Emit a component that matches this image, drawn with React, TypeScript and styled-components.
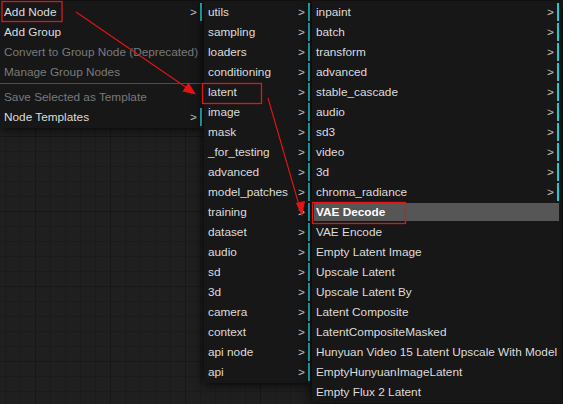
import React from "react";
import styled, { createGlobalStyle } from "styled-components";

const GlobalStyle = createGlobalStyle`
  html, body {
    margin: 0;
    padding: 0;
    background: #1e1e1e;
    overflow: hidden;
  }
  * { box-sizing: border-box; }
`;

// Node-graph canvas with a fine grid and a coarser major grid on top.
const Canvas = styled.div`
  position: relative;
  width: 563px;
  height: 404px;
  overflow: hidden;
  padding-top: 1px;
  display: flex;
  align-items: flex-start;
  background-color: #1f1f1f;
  background-image:
    linear-gradient(to right, #171717 1px, transparent 1px),
    linear-gradient(to bottom, #171717 1px, transparent 1px),
    linear-gradient(to right, #1b1b1b 1px, transparent 1px),
    linear-gradient(to bottom, #1b1b1b 1px, transparent 1px);
  background-size: 75px 75px, 75px 75px, 15px 15px, 15px 15px;
  background-position: 35px 61px, 35px 61px, 5px 1px, 5px 1px;
  font-family: "Liberation Sans", Arial, sans-serif;
  font-size: 11.8px;
`;

const Menu = styled.div<{ $width: number }>`
  position: relative;
  flex: none;
  width: ${(p) => p.$width}px;
  display: flex;
  flex-direction: column;
  gap: 2px;
  padding: 2px;
  background: #171717;
  box-shadow: 0 0 10px #000;
`;

const Entry = styled.div<{ $sub?: boolean; $disabled?: boolean; $active?: boolean }>`
  height: 18px;
  display: flex;
  align-items: center;
  justify-content: space-between;
  padding: 0 3px 0 2px;
  white-space: nowrap;
  line-height: 18px;
  color: ${(p) => (p.$disabled ? "#7a7a7a" : p.$active ? "#ffffff" : "#dcdcdc")};
  font-weight: ${(p) => (p.$active ? 700 : 400)};
  background: ${(p) => (p.$active ? "#565656" : "transparent")};
  border-right: 2px solid ${(p) => (p.$sub ? "#1fcbd3" : "transparent")};
`;

const Chevron = styled.span`
  color: #c4c4c4;
  margin-left: 8px;
`;

const Separator = styled.div`
  height: 3px;
  margin: 0 -2px;
  border-top: 1px solid #4c4c4c;
`;

const Annotations = styled.svg`
  position: absolute;
  left: 0;
  top: 0;
  pointer-events: none;
`;

type Item =
  | { kind: "sep" }
  | { kind?: "item"; label: string; sub?: boolean; disabled?: boolean; active?: boolean };

const mainMenu: Item[] = [
  { label: "Add Node", sub: true },
  { label: "Add Group" },
  { label: "Convert to Group Node (Deprecated)", disabled: true },
  { label: "Manage Group Nodes", disabled: true },
  { kind: "sep" },
  { label: "Save Selected as Template", disabled: true },
  { label: "Node Templates", sub: true },
];

const categories: Item[] = [
  "utils",
  "sampling",
  "loaders",
  "conditioning",
  "latent",
  "image",
  "mask",
  "_for_testing",
  "advanced",
  "model_patches",
  "training",
  "dataset",
  "audio",
  "sd",
  "3d",
  "camera",
  "context",
  "api node",
  "api",
].map((label) => ({ label, sub: true }));

const latentMenu: Item[] = [
  ...[
    "inpaint",
    "batch",
    "transform",
    "advanced",
    "stable_cascade",
    "audio",
    "sd3",
    "video",
    "3d",
    "chroma_radiance",
  ].map((label) => ({ label, sub: true })),
  { label: "VAE Decode", active: true },
  ...[
    "VAE Encode",
    "Empty Latent Image",
    "Upscale Latent",
    "Upscale Latent By",
    "Latent Composite",
    "LatentCompositeMasked",
    "Hunyuan Video 15 Latent Upscale With Model",
    "EmptyHunyuanImageLatent",
    "Empty Flux 2 Latent",
  ].map((label) => ({ label })),
];

function ContextMenu({ items, width }: { items: Item[]; width: number }) {
  return (
    <Menu $width={width}>
      {items.map((it, i) =>
        it.kind === "sep" ? (
          <Separator key={i} />
        ) : (
          <Entry key={i} $sub={it.sub} $disabled={it.disabled} $active={it.active}>
            <span>{it.label}</span>
            {it.sub && <Chevron>&gt;</Chevron>}
          </Entry>
        )
      )}
    </Menu>
  );
}

const RED = "#e41414";

export default function App() {
  return (
    <>
      <GlobalStyle />
      <Canvas>
        <ContextMenu items={mainMenu} width={204} />
        <ContextMenu items={categories} width={108} />
        <ContextMenu items={latentMenu} width={249} />
        <Annotations width={563} height={404} viewBox="0 0 563 404">
          <rect x={2} y={1.5} width={60} height={20} fill="none" stroke={RED} strokeWidth={1.3} />
          <rect x={202.5} y={83.5} width={59} height={20} fill="none" stroke={RED} strokeWidth={1.3} />
          <rect x={312.5} y={202.5} width={93} height={21} fill="none" stroke={RED} strokeWidth={1.3} />
          <line x1={76} y1={12} x2={187} y2={88} stroke={RED} strokeWidth={1.1} />
          <polygon points="196,94.5 182.5,91.5 188.5,82.5" fill={RED} />
          <line x1={268} y1={98} x2={299} y2={205} stroke={RED} strokeWidth={1.1} />
          <polygon points="302,216.5 296,203 305,201" fill={RED} />
        </Annotations>
      </Canvas>
    </>
  );
}
